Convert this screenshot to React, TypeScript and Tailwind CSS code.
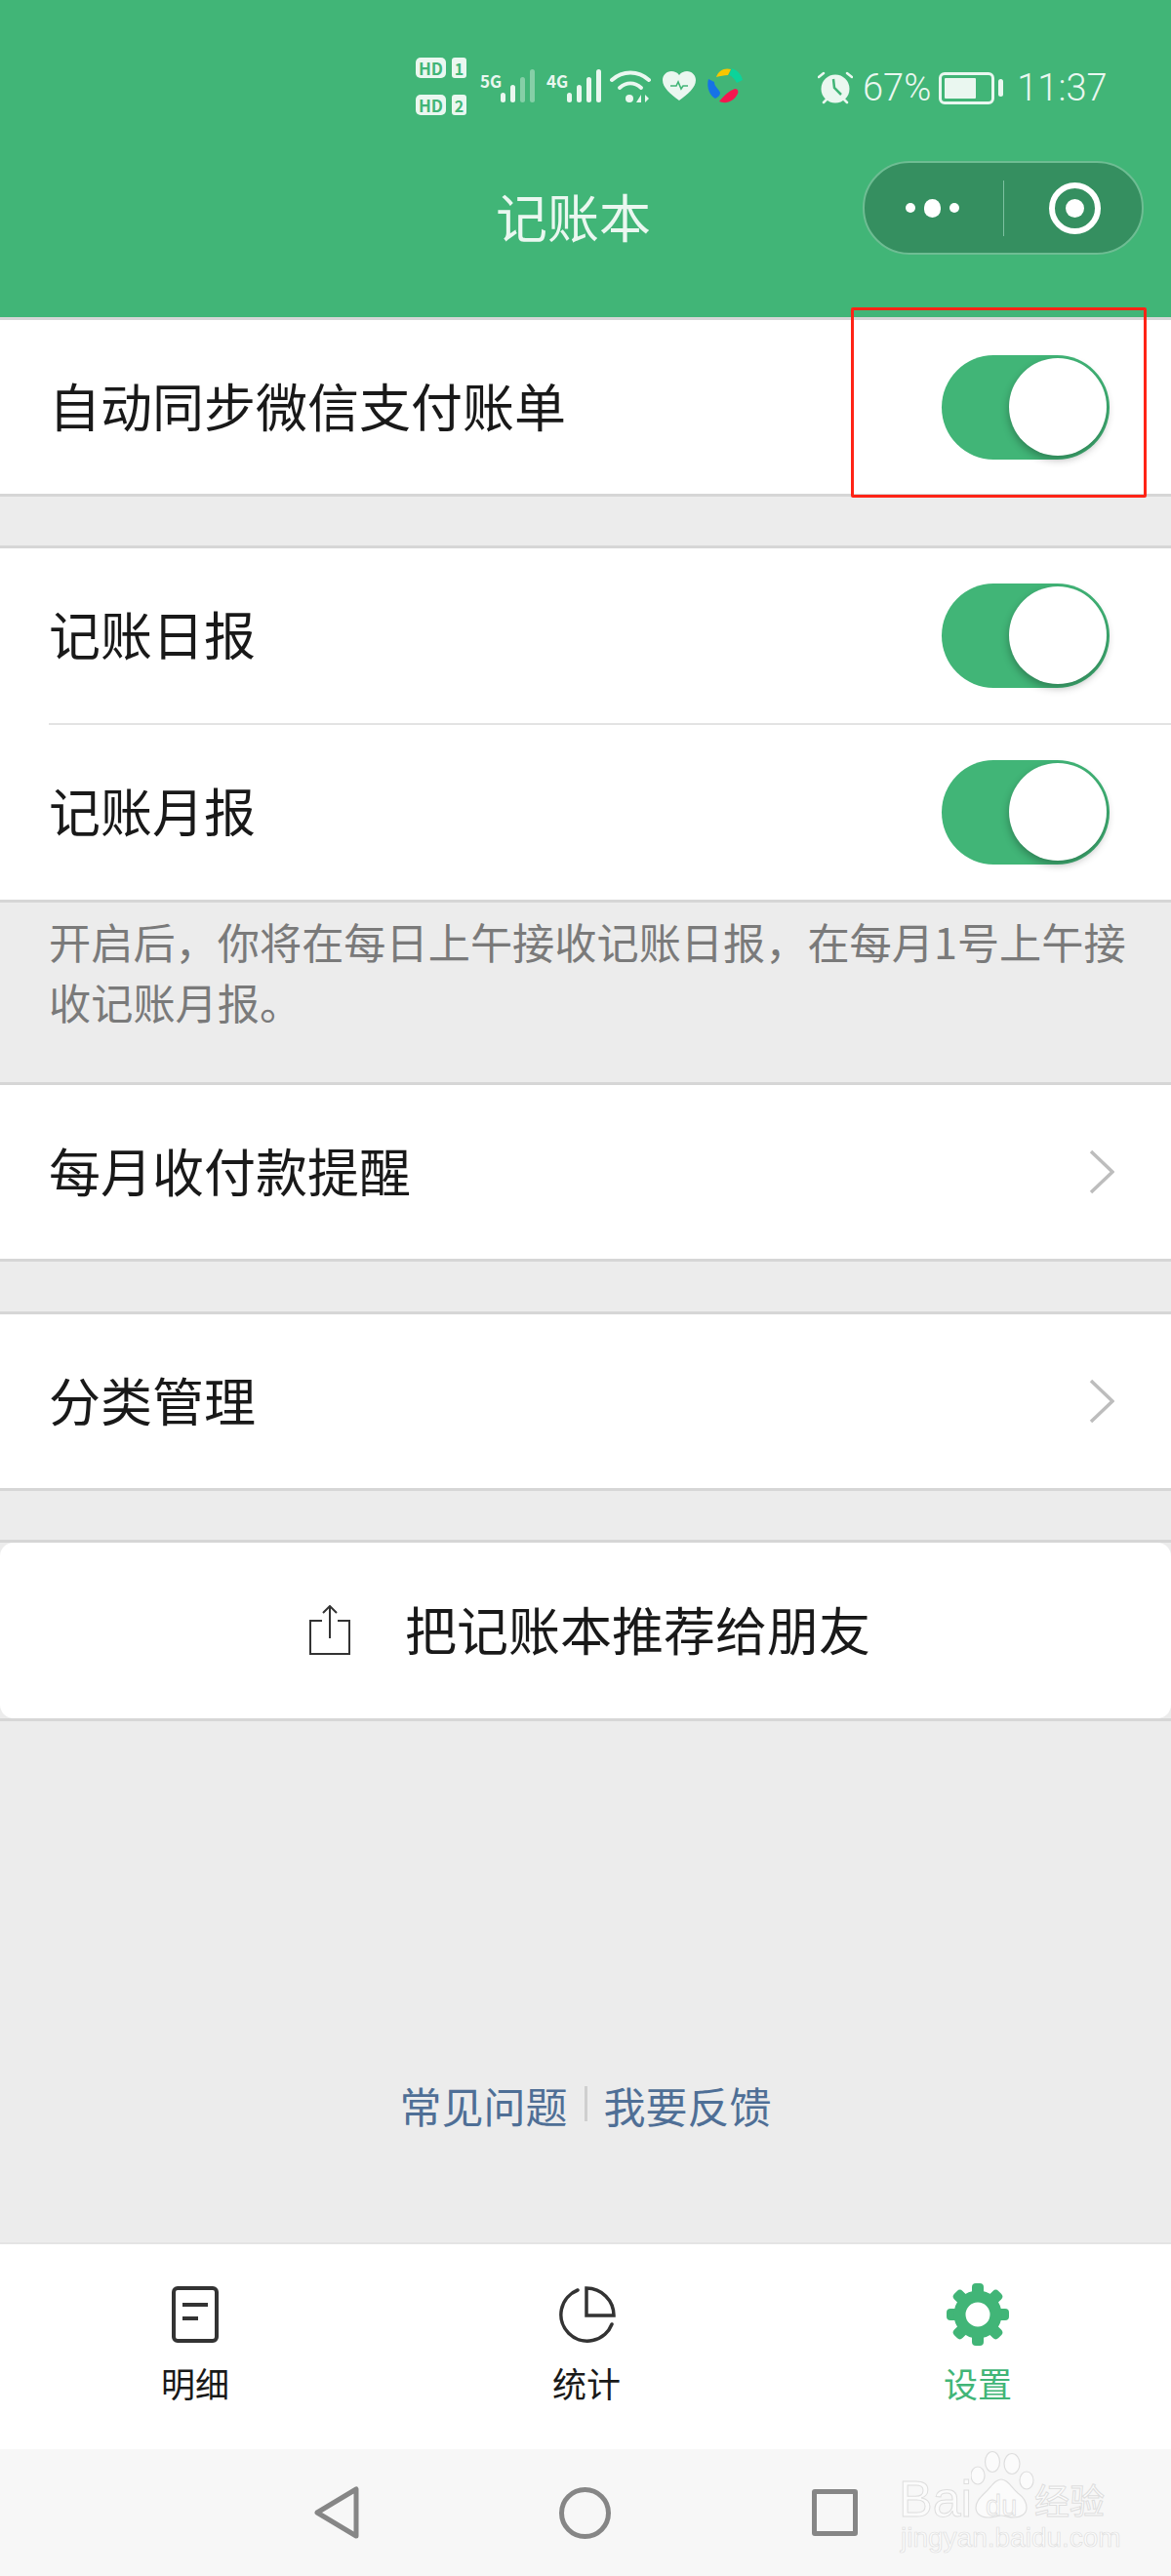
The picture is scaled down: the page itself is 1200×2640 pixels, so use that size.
import React from "react";

const cjk = "font-['Noto_Sans_CJK_SC','Noto_Sans',sans-serif]";

function Toggle() {
  return (
    <div className="relative h-[107px] w-[172px] rounded-full bg-[#41b577]">
      <div className="absolute right-[3px] top-[3px] h-[100px] w-[100px] rounded-full bg-white shadow-[0_4px_8px_rgba(0,0,0,0.3)]" />
    </div>
  );
}

function Chevron() {
  return (
    <svg width="26" height="46" viewBox="0 0 26 46" fill="none" className="-mr-[5px]">
      <path d="M2 2l22 21L2 44" stroke="#bdbdbd" strokeWidth="3.5" />
    </svg>
  );
}

function Row({ label, right, border = true }: { label: string; right: React.ReactNode; border?: boolean }) {
  return (
    <div className={`flex items-center justify-between pl-[50px] pr-[63px] ${border ? "h-[184px] border-y-[3px] border-[#d6d6d6]" : "h-[179px]"}`}>
      <span className="pb-[3px] text-[53px] text-[#191919]">{label}</span>
      {right}
    </div>
  );
}

function HdBadge({ n }: { n: string }) {
  return (
    <div className="flex items-center gap-[6px]">
      <span className="flex h-[21px] w-[31px] items-center justify-center rounded-[5px] bg-[#eaf7f0] text-[17px] font-bold leading-none text-[#41b577]">HD</span>
      <span className="flex h-[21px] w-[15px] items-center justify-center rounded-[3px] bg-[#eaf7f0] text-[16px] font-bold leading-none text-[#41b577]">{n}</span>
    </div>
  );
}

function Signal({ label, dim }: { label: string; dim?: boolean }) {
  const heights = [10, 18, 26, 34];
  return (
    <div className="flex h-[34px] items-end">
      <span className="mb-[14px] w-[20px] text-[17px] font-bold leading-none text-[#eaf7f0]">{label}</span>
      <div className="ml-[1px] flex items-end gap-[5px]">
        {heights.map((h, i) => (
          <div
            key={i}
            className={`w-[5px] rounded-full ${dim && i > 1 ? "bg-[#eaf7f0]/40" : "bg-[#eaf7f0]"}`}
            style={{ height: h }}
          />
        ))}
      </div>
    </div>
  );
}

function StatusBar() {
  return (
    <div className="flex h-[165px] items-start pl-[426px] pt-[59px] text-[#eaf7f0]">
      <div className="flex flex-col gap-[17px]">
        <HdBadge n="1" />
        <HdBadge n="2" />
      </div>
      <div className="mt-[12px] ml-[14px] flex items-start">
        <Signal label="5G" dim />
        <div className="ml-[12px]">
          <Signal label="4G" />
        </div>
        <svg width="44" height="36" viewBox="0 0 44 36" fill="none" className="ml-[9px]">
          <path d="M2 11C13 1 29 1 40 11" stroke="#eaf7f0" strokeWidth="4" strokeLinecap="round" />
          <path d="M10 19c7-6 15-6 22 0" stroke="#eaf7f0" strokeWidth="4" strokeLinecap="round" />
          <circle cx="20" cy="30" r="4" fill="#eaf7f0" />
          <path d="M32 26v8h-5zM36 26v8l4-4z" fill="#eaf7f0" />
        </svg>
        <svg width="34" height="30" viewBox="0 0 34 30" className="ml-[10px] mt-[2px]">
          <path d="M17 30C8 23 0 17 0 9c0-5 4-9 9-9 3 0 6 1 8 4 2-3 5-4 8-4 5 0 9 4 9 9 0 8-8 14-17 21z" fill="#eaf7f0" />
          <path d="M8 15h6l2-4 3 7 2-3h5" fill="none" stroke="#41b577" strokeWidth="1.6" />
        </svg>
        <svg width="36" height="37" viewBox="0 0 36 37" className="ml-[12px] -mt-[2px]">
          <path d="M9 10C11 3 18 0 24 2l-3 6c-4 0-8 1-12 2z" fill="#f7c600" />
          <path d="M25 1c6 2 10 7 11 12l-6 3c-2-4-5-7-8-8z" fill="#0bd39a" />
          <path d="M1 12c-2 7 0 16 7 20 3-2 5-3 5-6-2-5-6-6-6-11z" fill="#1673e6" />
          <path d="M12 35c7 3 15 0 19-8 1-3 0-5-3-5-6 2-11 7-16 13z" fill="#f5164f" />
        </svg>
      </div>
      <div className="ml-[77px] mt-[12px] flex items-center">
        <svg width="36" height="34" viewBox="0 0 36 34">
          <circle cx="18" cy="18" r="14.5" fill="#eaf7f0" />
          <path d="M16 8l1 9 7 7" fill="none" stroke="#41b577" strokeWidth="2.5" />
          <path d="M1 6l5-4M35 6l-5-4M6 32l3-3M30 32l-3-3" stroke="#eaf7f0" strokeWidth="2.5" strokeLinecap="round" />
        </svg>
        <span className="ml-[10px] text-[38px] font-light leading-none font-['Roboto',sans-serif]">67%</span>
        <div className="ml-[8px] flex items-center">
          <div className="flex h-[33px] w-[57px] rounded-[6px] border-[3px] border-[#eaf7f0] p-[3px]">
            <div className="w-[32px] rounded-[1px] bg-[#eaf7f0]" />
          </div>
          <div className="ml-[4px] h-[18px] w-[5px] rounded-full bg-[#eaf7f0]" />
        </div>
        <span className="ml-[14px] text-[38px] font-light leading-none font-['Roboto',sans-serif]">11:37</span>
      </div>
    </div>
  );
}

function Capsule() {
  return (
    <div className="flex h-[96px] w-[288px] items-center rounded-full border-[2px] border-[#6ebd93] bg-[#358f60]">
      <div className="flex w-[142px] items-center justify-center gap-[9px] pr-[4px]">
        <span className="h-[10px] w-[10px] rounded-full bg-white" />
        <span className="h-[19px] w-[17px] rounded-full bg-white" />
        <span className="h-[10px] w-[10px] rounded-full bg-white" />
      </div>
      <div className="h-[57px] w-px bg-[#7cc0a0]" />
      <div className="flex flex-1 items-center justify-center pl-[4px]">
        <div className="flex h-[53px] w-[53px] items-center justify-center rounded-full border-[6px] border-white">
          <div className="h-[19px] w-[19px] rounded-full bg-white" />
        </div>
      </div>
    </div>
  );
}

function ShareIcon() {
  return (
    <svg width="42" height="52" viewBox="0 0 42 52" fill="none" stroke="#333" strokeWidth="2">
      <path d="M13 16H1v34h40V16H29" />
      <path d="M21 34V1M14 8l7-7 7 7" />
    </svg>
  );
}

function Gear() {
  const teeth = [0, 45, 90, 135, 180, 225, 270, 315];
  return (
    <svg width="64" height="64" viewBox="0 0 64 64">
      {teeth.map((a) => (
        <rect key={a} x="26" y="0" width="12" height="16" rx="4" fill="#41b577" transform={`rotate(${a} 32 32)`} />
      ))}
      <circle cx="32" cy="32" r="18.5" fill="none" stroke="#41b577" strokeWidth="12" />
    </svg>
  );
}

function Tab({ label, icon, active, className }: { label: string; icon: React.ReactNode; active?: boolean; className?: string }) {
  return (
    <div className={`flex flex-col items-center ${className ?? ""}`}>
      <div className="flex h-[64px] items-center justify-center">{icon}</div>
      <span className={`mt-[18px] text-[35px] leading-[40px] ${active ? "text-[#41b577]" : "text-[#191919]"}`}>{label}</span>
    </div>
  );
}

function Watermark() {
  return (
    <div className="absolute left-[920px] top-[2510px] h-[106px] w-[220px] font-['Liberation_Sans',sans-serif] text-[#fbfbfb] [-webkit-text-stroke:1px_#dedede]">
      <span className="absolute left-[1px] top-[25px] text-[52px] leading-[52px]">Bai</span>
      <svg width="65" height="75" viewBox="0 0 65 75" fill="#fbfbfb" stroke="#dedede" strokeWidth="1.2" className="absolute left-[75px] top-0">
        <ellipse cx="7" cy="27" rx="7" ry="9" />
        <ellipse cx="22" cy="13" rx="7.5" ry="10.5" />
        <ellipse cx="42" cy="15" rx="8" ry="10.5" />
        <ellipse cx="57" cy="32" rx="7" ry="9" />
        <path d="M31 31C38 31 42 40 48 45C55 50 57 56 57 60C57 67 50 70 44 70C38 70 35 68 31 68C27 68 24 70 18 70C10 70 5 66 5 60C5 54 9 50 14 45C20 40 24 31 31 31Z" />
      </svg>
      <span className="absolute left-[90px] top-[43px] text-[29px] leading-[30px] [-webkit-text-stroke:0.8px_#dedede]">du</span>
      <span className={`absolute left-[140px] top-[29px] text-[36px] leading-[44px] ${cjk}`}>经验</span>
      <span className="absolute left-[3px] top-[76px] text-[28px] leading-[30px] [-webkit-text-stroke:0.7px_#dedede]">jingyan.baidu.com</span>
    </div>
  );
}

export default function App() {
  return (
    <div className={`relative flex h-[2640px] w-[1200px] flex-col overflow-hidden bg-[#ececec] ${cjk}`}>
      <header className="h-[325px] shrink-0 bg-[#41b577]">
        <StatusBar />
        <div className="flex items-start justify-between pl-[508px] pr-[28px]">
          <span className="mt-[8px] text-[53px] leading-[96px] text-[#eaf7f0]">记账本</span>
          <Capsule />
        </div>
      </header>

      <section className="bg-white">
        <Row label="自动同步微信支付账单" right={<Toggle />} />
      </section>
      <div className="h-[50px]" />

      <section className="border-y-[3px] border-[#d6d6d6] bg-white">
        <Row label="记账日报" right={<Toggle />} border={false} />
        <div className="ml-[50px] h-[2px] bg-[#e3e3e3]" />
        <Row label="记账月报" right={<Toggle />} border={false} />
      </section>
      <p className="h-[184px] pl-[50px] pr-[30px] pt-[8px] text-[43.2px] leading-[62px] text-[#7a7a7a]">
        开启后，你将在每日上午接收记账日报，在每月1号上午接收记账月报。
      </p>

      <section className="bg-white">
        <Row label="每月收付款提醒" right={<Chevron />} />
      </section>
      <div className="h-[51px]" />
      <section className="bg-white">
        <Row label="分类管理" right={<Chevron />} />
      </section>
      <div className="h-[50px]" />

      <div className="border-y-[3px] border-[#d6d6d6]">
        <div className="flex h-[180px] items-center rounded-[14px] bg-white pl-[317px]">
          <ShareIcon />
          <span className="ml-[56px] pb-[3px] text-[53px] text-[#191919]">把记账本推荐给朋友</span>
        </div>
      </div>

      <div className="flex flex-1 items-end justify-center pb-[111px] text-[43px] leading-[60px] text-[#4f6f96]">
        <span>常见问题</span>
        <span className="mx-[17px] mb-[13px] h-[36px] w-[3px] bg-[#cfcfcf]" />
        <span>我要反馈</span>
      </div>

      <nav className="grid h-[212px] shrink-0 grid-cols-3 border-t-[2px] border-[#e4e4e4] bg-white pt-[40px]">
        <Tab
          label="明细"
          icon={
            <svg width="48" height="58" viewBox="0 0 48 58" fill="none" stroke="#333" strokeWidth="4">
              <rect x="2" y="2" width="44" height="54" rx="4" />
              <path d="M11 19h26M11 33h16" />
            </svg>
          }
        />
        <Tab
          label="统计"
          className="pl-[2px]"
          icon={
            <svg width="62" height="58" viewBox="0 0 62 58" fill="none" stroke="#333" strokeWidth="3.5">
              <path d="M22 4A27 27 0 1 0 57 39" strokeLinecap="round" />
              <path d="M31 30V2A28 28 0 0 1 59 30Z" />
            </svg>
          }
        />
        <Tab label="设置" icon={<Gear />} active className="pl-[4px]" />
      </nav>

      <div className="flex h-[130px] shrink-0 items-center bg-[#f7f7f7] pl-[322px]">
        <svg width="46" height="54" viewBox="0 0 46 54" fill="none" stroke="#868686" strokeWidth="5" strokeLinejoin="round">
          <path d="M43 3v48L3 27z" />
        </svg>
        <span className="ml-[205px] h-[53px] w-[53px] rounded-full border-[5px] border-[#868686]" />
        <span className="ml-[206px] h-[48px] w-[47px] rounded-[3px] border-[5px] border-[#868686]" />
      </div>

      <Watermark />

      {/* red annotation box from the original screenshot */}
      <div className="absolute left-[872px] top-[315px] h-[195px] w-[303px] rounded-[2px] border-[3px] border-[#ff2416]" />
    </div>
  );
}
